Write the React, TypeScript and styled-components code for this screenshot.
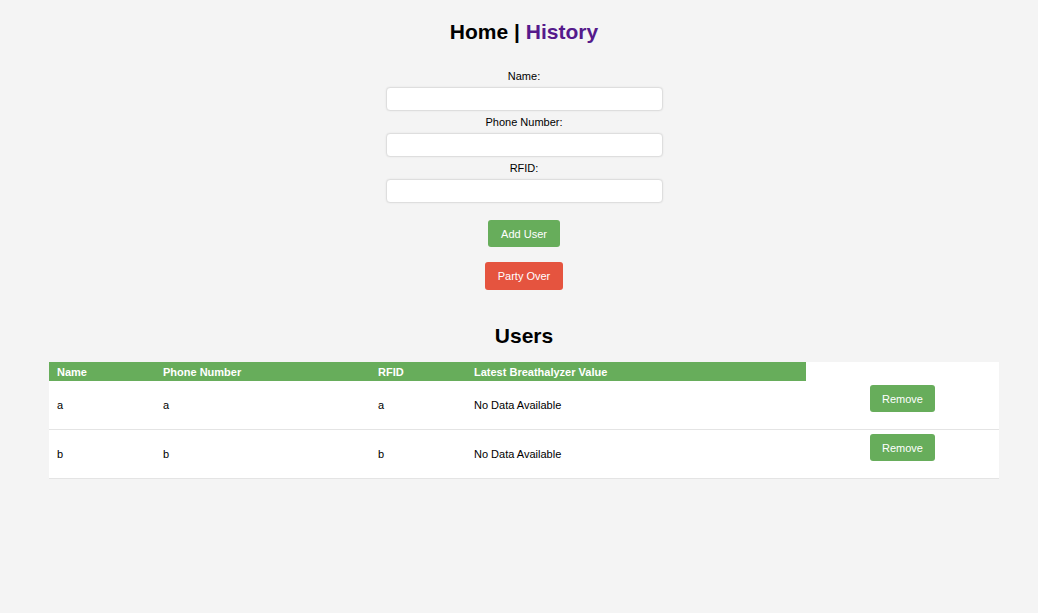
import styled, { createGlobalStyle } from "styled-components";

const GlobalStyle = createGlobalStyle`
  html, body {
    margin: 0;
    padding: 0;
    background: #f4f4f4;
    font-family: "Liberation Sans", Arial, sans-serif;
    color: #000;
  }
`;

const Page = styled.div`
  display: flex;
  flex-direction: column;
  align-items: center;
  padding: 19px 0 0 10px;
`;

const Nav = styled.h1`
  margin: 0;
  font-size: 21px;
  line-height: 26px;
  font-weight: bold;
`;

const NavLink = styled.a<{ $visited?: boolean }>`
  color: ${(p) => (p.$visited ? "#551a8b" : "#000")};
  text-decoration: none;
`;

const Form = styled.form`
  display: flex;
  flex-direction: column;
  align-items: center;
  margin-top: 25px;
`;

const Label = styled.label`
  font-size: 11px;
  line-height: 13px;
  margin-bottom: 4px;
`;

const Input = styled.input`
  box-sizing: border-box;
  width: 277px;
  height: 24px;
  margin: 0 0 5px;
  border: 1px solid #dedede;
  border-radius: 4px;
  background: #fff;
  box-shadow: 0 0 2px rgba(0, 0, 0, 0.08);
`;

const Button = styled.button<{ $color: string }>`
  background: ${(p) => p.$color};
  color: #fff;
  border: none;
  border-radius: 3px;
  font-family: "Liberation Sans", Arial, sans-serif;
  font-size: 11px;
  height: 27px;
  padding: 0 13px;
  cursor: pointer;
`;

const AddButton = styled(Button)`
  margin-top: 12px;
`;

const PartyButton = styled(Button)`
  margin-top: 15px;
  height: 28px;
`;

const Heading = styled.h2`
  margin: 33px 0 0;
  font-size: 21px;
  line-height: 26px;
  font-weight: bold;
`;

const Table = styled.table`
  margin-top: 13px;
  width: 950px;
  border-collapse: collapse;
  background: #fff;
  font-size: 11px;
  table-layout: fixed;
`;

const Th = styled.th<{ $w: number }>`
  width: ${(p) => p.$w}px;
  background: #67ad5b;
  color: #fff;
  text-align: left;
  font-weight: bold;
  height: 19px;
  padding: 0 8px;
  box-sizing: border-box;
`;

const EmptyTh = styled.th`
  background: #fff;
`;

const Row = styled.tr`
  border-bottom: 1px solid #e4e4e4;
`;

const Td = styled.td`
  height: 48px;
  padding: 0 8px;
  vertical-align: middle;
`;

const ActionTd = styled.td`
  vertical-align: top;
  text-align: center;
  padding: 4px 0 0;
`;

const RemoveButton = styled(Button)`
  padding: 0 12px;
  height: 27px;
`;

const users = [
  { name: "a", phone: "a", rfid: "a" },
  { name: "b", phone: "b", rfid: "b" },
];

export default function App() {
  return (
    <>
      <GlobalStyle />
      <Page>
        <Nav>
          <NavLink href="#">Home</NavLink> | <NavLink href="#" $visited>History</NavLink>
        </Nav>
        <Form onSubmit={(e) => e.preventDefault()}>
          <Label>Name:</Label>
          <Input type="text" />
          <Label>Phone Number:</Label>
          <Input type="text" />
          <Label>RFID:</Label>
          <Input type="text" />
          <AddButton type="submit" $color="#67ad5b">Add User</AddButton>
          <PartyButton type="button" $color="#e5543f">Party Over</PartyButton>
        </Form>
        <Heading>Users</Heading>
        <Table>
          <thead>
            <tr>
              <Th $w={106}>Name</Th>
              <Th $w={215}>Phone Number</Th>
              <Th $w={96}>RFID</Th>
              <Th $w={340}>Latest Breathalyzer Value</Th>
              <EmptyTh />
            </tr>
          </thead>
          <tbody>
            {users.map((u) => (
              <Row key={u.name}>
                <Td>{u.name}</Td>
                <Td>{u.phone}</Td>
                <Td>{u.rfid}</Td>
                <Td>No Data Available</Td>
                <ActionTd>
                  <RemoveButton type="button" $color="#67ad5b">Remove</RemoveButton>
                </ActionTd>
              </Row>
            ))}
          </tbody>
        </Table>
      </Page>
    </>
  );
}
